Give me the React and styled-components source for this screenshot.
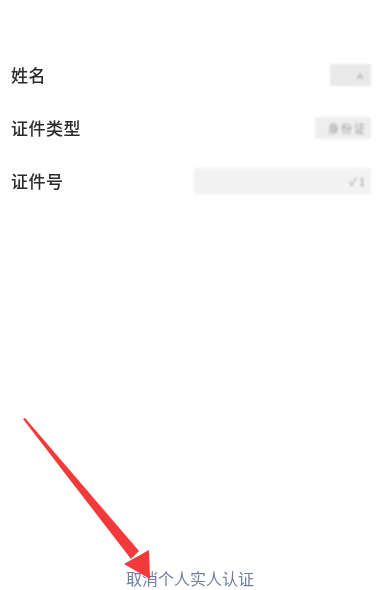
import React from "react";
import styled, { createGlobalStyle } from "styled-components";

const Global = createGlobalStyle`
  html, body { margin: 0; padding: 0; background: #fff; }
  body { font-family: "Noto Sans CJK SC", "Noto Sans", sans-serif; }
`;

const Page = styled.div`
  position: relative;
  width: 380px;
  height: 590px;
  overflow: hidden;
  display: flex;
  flex-direction: column;
  padding-top: 48px;
  padding-bottom: 3px;
  box-sizing: border-box;
  background: #fff;
`;

const List = styled.div`
  display: flex;
  flex-direction: column;
`;

const Row = styled.div`
  height: 53px;
  display: flex;
  align-items: center;
  justify-content: space-between;
  padding: 0 9px 0 11px;
`;

const Label = styled.span`
  font-size: 17px;
  font-weight: 500;
  color: #2a2a2a;
  letter-spacing: 0.5px;
  filter: blur(0.3px);
`;

const Masked = styled.div`
  width: ${(p) => p.w}px;
  height: ${(p) => p.h}px;
  background: ${(p) => p.bg};
  filter: blur(1.2px);
  display: flex;
  align-items: center;
  justify-content: flex-end;
  padding-right: 4px;
  box-sizing: border-box;
  color: #9a9a9a;
  font-size: 11px;
  letter-spacing: 2px;
`;

const Footer = styled.div`
  margin-top: auto;
  text-align: center;
  font-size: 16px;
  line-height: 18px;
  color: #6f7e9e;
  filter: blur(0.4px);
`;

const Arrow = styled.svg`
  position: absolute;
  left: 0;
  top: 0;
  pointer-events: none;
`;

export default function App() {
  return (
    <>
      <Global />
      <Page>
        <List>
          <Row>
            <Label>姓名</Label>
            <Masked w={41} h={22} bg="#e9e9e9">ㅅ</Masked>
          </Row>
          <Row>
            <Label>证件类型</Label>
            <Masked w={56} h={22} bg="#eeeeee">身份证</Masked>
          </Row>
          <Row>
            <Label>证件号</Label>
            <Masked w={177} h={26} bg="#f2f2f2">✓1</Masked>
          </Row>
        </List>
        <Footer>取消个人实人认证</Footer>
        <Arrow width="380" height="590" viewBox="0 0 380 590">
          <polygon points="23,419 25,418 139,551 131,559" fill="#f23a3a" />
          <polygon points="124,564 149,550 150,579" fill="#f23a3a" />
        </Arrow>
      </Page>
    </>
  );
}
